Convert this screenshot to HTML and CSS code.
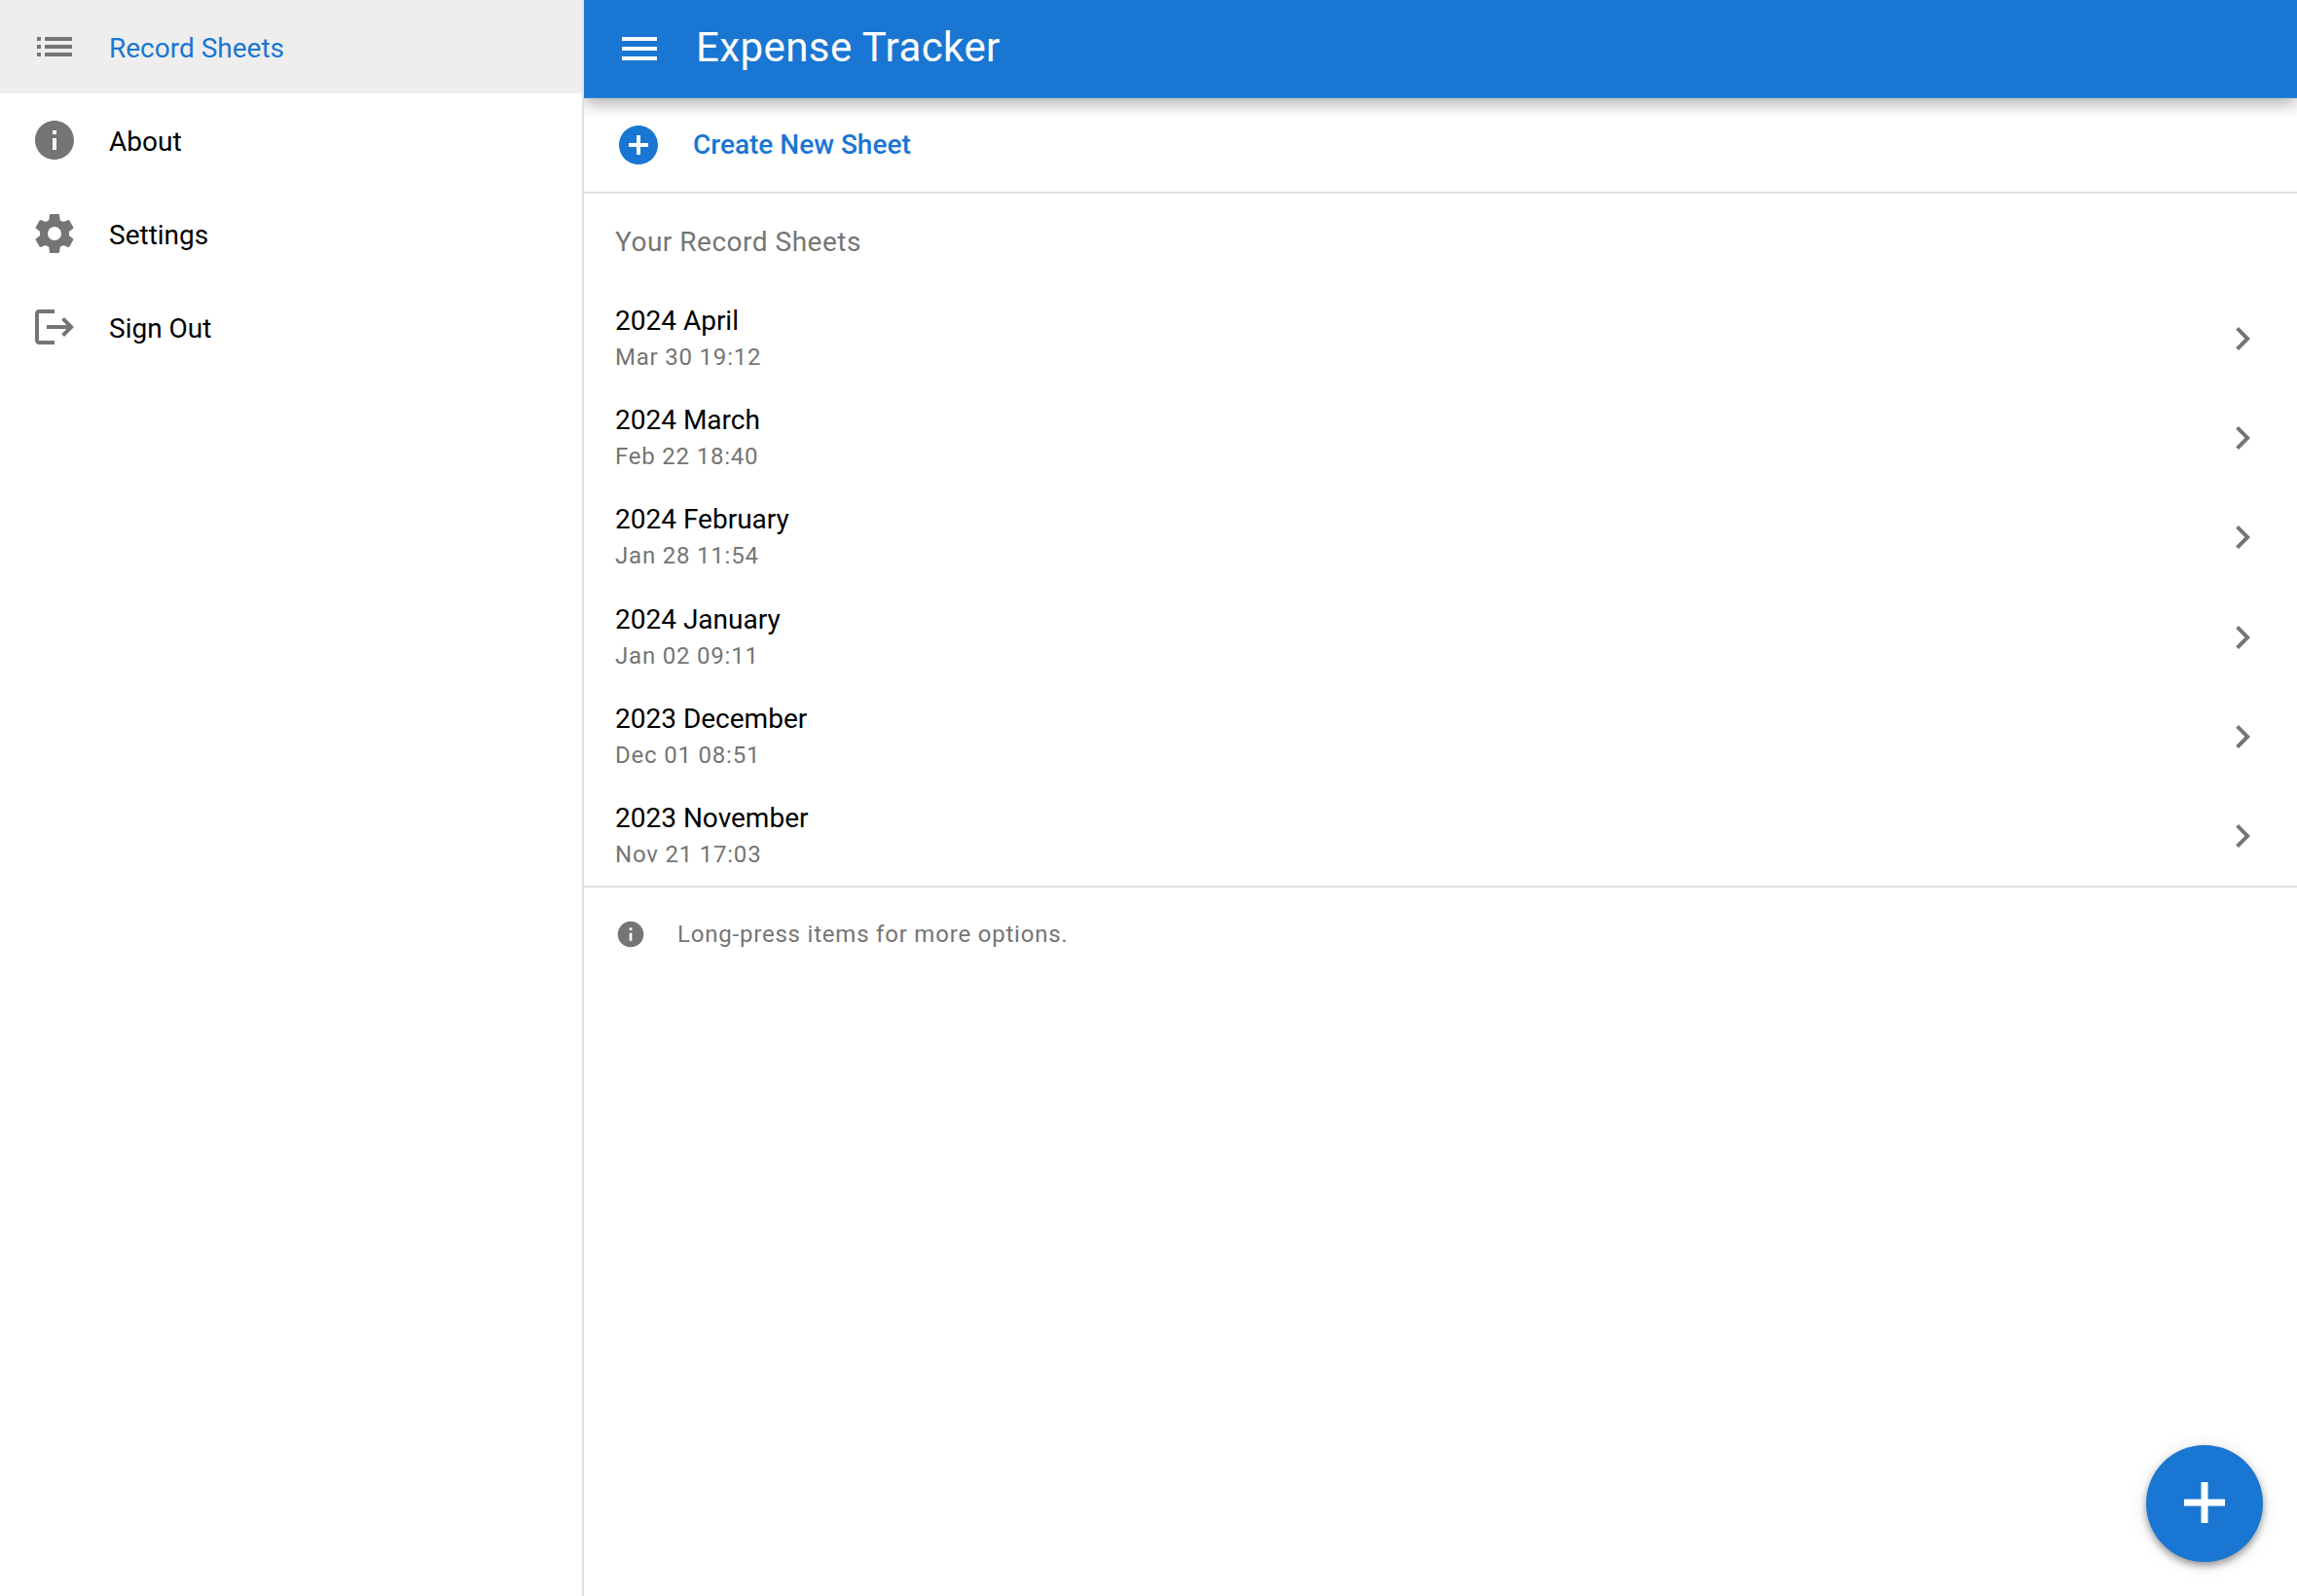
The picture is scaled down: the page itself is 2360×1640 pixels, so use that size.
FILE: index.html
```html
<!DOCTYPE html>
<html lang="en">
<head>
<meta charset="utf-8">
<title>Expense Tracker</title>
<link rel="stylesheet" href="styles.css">
</head>
<body>
<div class="app">
  <nav class="sidebar" aria-label="Main">
    <a class="nav-item active" href="#sheets" aria-current="page">
      <svg class="icon" viewBox="0 0 24 24"><path d="M3 7h2v2H3zm4 0h14v2H7zM3 11h2v2H3zm4 0h14v2H7zM3 15h2v2H3zm4 0h14v2H7z"/></svg>
      <span>Record Sheets</span>
    </a>
    <a class="nav-item" href="#about">
      <svg class="icon" viewBox="0 0 24 24"><path d="M12 2C6.480 2 2 6.480 2 12s4.480 10 10 10 10-4.480 10-10S17.520 2 12 2zm1 15h-2v-6h2v6zm0-8h-2V7h2v2z"/></svg>
      <span>About</span>
    </a>
    <a class="nav-item" href="#settings">
      <svg class="icon" viewBox="0 0 24 24"><path d="M12 15.500A3.500 3.500 0 0 1 8.500 12 3.500 3.500 0 0 1 12 8.500a3.500 3.500 0 0 1 3.500 3.500 3.500 3.500 0 0 1-3.500 3.500m7.430-2.530c.04-.32.07-.64.07-.97 0-.33-.03-.66-.07-1l2.110-1.630c.19-.15.24-.42.12-.64l-2-3.460c-.12-.22-.39-.31-.61-.22l-2.490 1c-.52-.39-1.060-.73-1.690-.98l-.37-2.650A.506.506 0 0 0 14 2h-4c-.25 0-.46.18-.5.42l-.37 2.650c-.63.25-1.170.59-1.690.98l-2.490-1c-.22-.09-.49 0-.61.22l-2 3.460c-.13.22-.07.49.12.64L4.570 11c-.04.34-.07.67-.07 1 0 .33.03.65.07.97l-2.110 1.660c-.19.15-.25.42-.12.64l2 3.460c.12.22.39.3.61.22l2.490-1.010c.52.4 1.060.74 1.690.99l.37 2.650c.04.24.25.42.5.42h4c.25 0 .46-.18.5-.42l.37-2.650c.63-.26 1.170-.59 1.690-.99l2.490 1.010c.22.08.49 0 .61-.22l2-3.460c.12-.22.07-.49-.12-.64z"/></svg>
      <span>Settings</span>
    </a>
    <a class="nav-item" href="#signout">
      <svg class="icon" viewBox="0 0 24 24"><path d="M17 7l-1.410 1.410L18.170 11H8v2h10.170l-2.580 2.590L17 17l5-5zM4 5h8V3H4c-1.100 0-2 .9-2 2v14c0 1.100.9 2 2 2h8v-2H4z"/></svg>
      <span>Sign Out</span>
    </a>
  </nav>
  <div class="content">
    <header class="toolbar">
      <button class="menu-button" type="button" aria-label="Menu">
        <svg class="icon" viewBox="0 0 24 24"><path d="M3 18h18v-2H3zm0-5h18v-2H3zm0-7v2h18V6z"/></svg>
      </button>
      <h1 class="title">Expense Tracker</h1>
    </header>
    <main>
      <button class="create" type="button">
        <svg class="icon" viewBox="0 0 24 24"><path d="M12 2C6.480 2 2 6.480 2 12s4.480 10 10 10 10-4.480 10-10S17.520 2 12 2zm5 11h-4v4h-2v-4H7v-2h4V7h2v4h4z"/></svg>
        <span>Create New Sheet</span>
      </button>
      <h2 class="list-title">Your Record Sheets</h2>
      <ul class="sheets">
        <li><a class="sheet" href="#2024-04"><span class="sheet-text"><span class="name">2024 April</span><span class="date">Mar 30 19:12</span></span><svg class="icon" viewBox="0 0 24 24"><path d="M10 6L8.590 7.410 13.170 12l-4.580 4.590L10 18l6-6z"/></svg></a></li>
        <li><a class="sheet" href="#2024-03"><span class="sheet-text"><span class="name">2024 March</span><span class="date">Feb 22 18:40</span></span><svg class="icon" viewBox="0 0 24 24"><path d="M10 6L8.590 7.410 13.170 12l-4.580 4.590L10 18l6-6z"/></svg></a></li>
        <li><a class="sheet" href="#2024-02"><span class="sheet-text"><span class="name">2024 February</span><span class="date">Jan 28 11:54</span></span><svg class="icon" viewBox="0 0 24 24"><path d="M10 6L8.590 7.410 13.170 12l-4.580 4.590L10 18l6-6z"/></svg></a></li>
        <li><a class="sheet" href="#2024-01"><span class="sheet-text"><span class="name">2024 January</span><span class="date">Jan 02 09:11</span></span><svg class="icon" viewBox="0 0 24 24"><path d="M10 6L8.590 7.410 13.170 12l-4.580 4.590L10 18l6-6z"/></svg></a></li>
        <li><a class="sheet" href="#2023-12"><span class="sheet-text"><span class="name">2023 December</span><span class="date">Dec 01 08:51</span></span><svg class="icon" viewBox="0 0 24 24"><path d="M10 6L8.590 7.410 13.170 12l-4.580 4.590L10 18l6-6z"/></svg></a></li>
        <li><a class="sheet" href="#2023-11"><span class="sheet-text"><span class="name">2023 November</span><span class="date">Nov 21 17:03</span></span><svg class="icon" viewBox="0 0 24 24"><path d="M10 6L8.590 7.410 13.170 12l-4.580 4.590L10 18l6-6z"/></svg></a></li>
      </ul>
      <p class="hint">
        <svg class="icon small" viewBox="0 0 24 24"><path d="M12 2C6.480 2 2 6.480 2 12s4.480 10 10 10 10-4.480 10-10S17.520 2 12 2zm1 15h-2v-6h2v6zm0-8h-2V7h2v2z"/></svg>
        <span>Long-press items for more options.</span>
      </p>
    </main>
  </div>
  <button class="fab" type="button" aria-label="Add record">
    <svg viewBox="0 0 42 42"><path d="M17.500 0h7v17.500H42v7H24.500V42h-7V24.500H0v-7h17.500z"/></svg>
  </button>
</div>
</body>
</html>
```
FILE: styles.css
```css
:root {
  --primary: #1976d2;
  --muted: #757575;
  --line: #e0e0e0;
}

* { box-sizing: border-box; }

body {
  margin: 0;
  background: #fff;
  color: #000;
  font: 400 28px/36px Roboto, sans-serif;
}

h1, h2, p, ul { margin: 0; padding: 0; font-weight: 400; }
ul { list-style: none; }
a { color: inherit; text-decoration: none; }
button { border: 0; background: none; padding: 0; font: inherit; text-align: left; cursor: pointer; }

.icon { flex: none; width: 48px; height: 48px; fill: var(--muted); }
.icon.small { width: 32px; height: 32px; }

.app { display: flex; min-height: 100vh; }

.sidebar {
  flex: none;
  width: 600px;
  border-right: 2px solid var(--line);
}
.nav-item {
  display: flex;
  align-items: center;
  gap: 32px;
  height: 96px;
  padding: 0 32px;
}
.nav-item span { padding-top: 4px; }
.nav-item.active { background: #eee; color: var(--primary); }

.content { flex: 1; min-width: 0; }

.toolbar {
  position: relative;
  display: flex;
  align-items: center;
  gap: 34px;
  height: 101px;
  padding: 0 33px;
  border-bottom: 1px solid #3f8dd9;
  background: var(--primary);
  color: #fff;
  box-shadow: 0 6px 16px rgba(0, 0, 0, .3);
  clip-path: inset(0 0 -19px 0);
}
.menu-button { display: flex; }
.menu-button .icon { fill: #fff; }
.title { padding-bottom: 2px; font-size: 42px; line-height: 56px; letter-spacing: .01em; }

.create {
  display: flex;
  align-items: center;
  gap: 32px;
  width: 100%;
  height: 98px;
  padding: 0 32px;
  border-bottom: 2px solid var(--line);
  color: var(--primary);
  font-weight: 500;
}
.create .icon { fill: var(--primary); }

.list-title {
  padding: 32px 32px 30px;
  color: var(--muted);
  font-size: 28px;
  letter-spacing: .018em;
}

.sheets {
  display: grid;
  grid-auto-rows: 1fr;
  min-height: 615px;
  border-bottom: 2px solid var(--line);
}
.sheet {
  display: flex;
  align-items: center;
  justify-content: space-between;
  height: 100%;
  padding: 0 32px;
}
.sheet-text { display: grid; padding-top: 2px; }
.date, .hint { color: var(--muted); font-size: 24px; letter-spacing: .033em; }
.date { line-height: 38px; }

.hint {
  display: flex;
  align-items: center;
  gap: 32px;
  height: 96px;
  padding: 0 32px;
}

.fab {
  position: fixed;
  right: 35px;
  bottom: 35px;
  display: grid;
  place-items: center;
  width: 120px;
  height: 120px;
  padding-bottom: 2px;
  border-radius: 50%;
  background: var(--primary);
  box-shadow: 0 4px 8px -2px rgba(0, 0, 0, .3), 0 4px 10px rgba(0, 0, 0, .2), 0 2px 20px rgba(0, 0, 0, .1);
}
.fab svg { width: 42px; height: 42px; fill: #fff; }
```
